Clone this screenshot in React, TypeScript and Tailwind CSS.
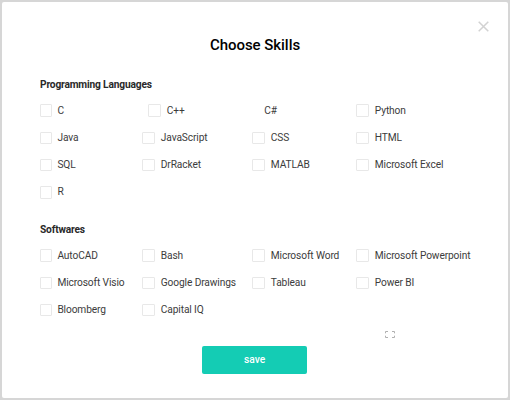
type Skill = { name: string; shift?: string; noBox?: boolean };

const languages: Skill[] = [
  { name: "C" },
  { name: "C++", shift: "pl-[6px]" },
  { name: "C#", shift: "pl-[12.3px]", noBox: true },
  { name: "Python" },
  { name: "Java" },
  { name: "JavaScript" },
  { name: "CSS" },
  { name: "HTML" },
  { name: "SQL" },
  { name: "DrRacket" },
  { name: "MATLAB" },
  { name: "Microsoft Excel" },
  { name: "R" },
];

const softwares: Skill[] = [
  { name: "AutoCAD" },
  { name: "Bash" },
  { name: "Microsoft Word" },
  { name: "Microsoft Powerpoint" },
  { name: "Microsoft Visio" },
  { name: "Google Drawings" },
  { name: "Tableau" },
  { name: "Power BI" },
  { name: "Bloomberg" },
  { name: "Capital IQ" },
];

function SkillSection({ title, skills }: { title: string; skills: Skill[] }) {
  return (
    <section>
      <h2 className="text-[10.2px] leading-[12px] font-bold tracking-[-0.17px] text-[#292929]">{title}</h2>
      <div className="mt-[6px] grid auto-rows-[27.25px] grid-cols-[102px_110px_104px_120px]">
        {skills.map((skill, i) => (
          <label key={skill.name} className={`flex items-center whitespace-nowrap ${skill.shift ?? ""}`}>
            {!skill.noBox && (
              <span
                className={`h-[12.5px] shrink-0 rounded-[1px] border border-[#e8e8e8] bg-white ${i % 4 === 0 ? "mr-[5.4px] w-[12px]" : "mr-[6.3px] w-[12.5px]"}`}
              />
            )}
            <span className="text-[10.2px] leading-[12px] tracking-[-0.12px] text-[#3c3c3c]">{skill.name}</span>
          </label>
        ))}
      </div>
    </section>
  );
}

export default function App() {
  return (
    <div className="flex h-[400px] w-[510px] bg-[#d6d6d6] p-[2px] font-[Roboto,sans-serif]">
      <main className="flex w-full flex-col rounded-[2px] bg-white px-[38px]">
        <div className="-mr-[19px] flex h-[34px] justify-end pt-[19px]">
          <button aria-label="Close" className="size-[11px]">
            <svg viewBox="0 0 11 11" className="size-[11px]" fill="none" stroke="#d2d2d2" strokeWidth="1.5">
              <path d="M.7.7l9.6 9.6M10.3.7L.7 10.3" />
            </svg>
          </button>
        </div>
        <h1 className="text-center text-[15px] leading-[18px] font-medium tracking-[-0.04px] text-black">Choose Skills</h1>
        <div className="mt-[24.9px] flex flex-col gap-[18.1px]">
          <SkillSection title="Programming Languages" skills={languages} />
          <SkillSection title="Softwares" skills={softwares} />
        </div>
        <div className="mt-[7px] flex h-[7px] pl-[345px]">
          <svg viewBox="0 0 10 7" className="h-[7px] w-[10px]" fill="none" stroke="#b0b0b0">
            <path d="M.5 2.3V.5H3M7 .5h2.5v1.8M.5 4.7v1.8H3M7 6.5h2.5V4.7" />
          </svg>
        </div>
        <button className="mt-[7.9px] ml-[162.4px] h-[28.4px] w-[104.4px] rounded-[2px] bg-[#14ccb4] text-[10.2px] font-medium text-white">
          save
        </button>
      </main>
    </div>
  );
}
